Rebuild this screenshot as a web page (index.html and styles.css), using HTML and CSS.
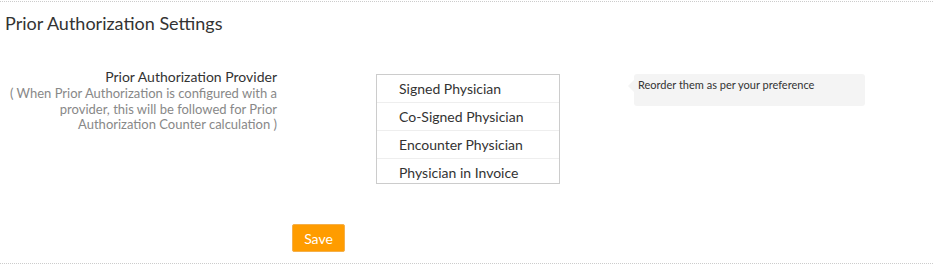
FILE: index.html
```html
<!DOCTYPE html>
<html lang="en">
<head>
    <meta charset="UTF-8">
    <meta name="viewport" content="width=device-width, initial-scale=1.0">
    <title>Prior Authorization Settings</title>
    <link rel="stylesheet" href="styles.css">
</head>
<body>
    <div class="settings">
        <h2 class="settings-title">Prior Authorization Settings</h2>
        <div class="setting-row">
            <div class="setting-label">
                <div class="label-main">Prior Authorization Provider</div>
                <div class="label-note">( When Prior Authorization is configured with a provider, this will be followed for Prior Authorization Counter calculation )</div>
            </div>
            <ul class="sort-list">
                <li>Signed Physician</li>
                <li>Co-Signed Physician</li>
                <li>Encounter Physician</li>
                <li>Physician in Invoice</li>
            </ul>
            <div class="hint">Reorder them as per your preference</div>
        </div>
        <div class="actions">
            <button type="button" class="btn-save">Save</button>
        </div>
    </div>
</body>
</html>
```

FILE: styles.css
```css
body {
    margin: 0;
    padding: 0;
    font-family: Lato, "Open Sans", sans-serif;
    color: #333;
    background: #fff;
}
.settings {
    margin-top: 1px;
    border-top: 1px dotted #ccc;
    border-bottom: 1px dotted #ccc;
    padding: 0 0 11px 0;
}
.settings-title {
    font-size: 18px;
    font-weight: normal;
    line-height: 20px;
    margin: 11px 0 0 5px;
}
.setting-row {
    display: flex;
    align-items: flex-start;
    margin-top: 36px;
}
.setting-label {
    width: 272px;
    margin-left: 5px;
    text-align: right;
}
.label-main {
    font-size: 14px;
    line-height: 16px;
}
.label-note {
    font-size: 13px;
    line-height: 15.5px;
    margin-top: 1px;
    color: #888;
}
.sort-list {
    list-style: none;
    margin: 5px 0 0 99px;
    padding: 0;
    width: 182px;
    height: 108px;
    overflow: hidden;
    border: 1px solid #ccc;
}
.sort-list li {
    box-sizing: border-box;
    height: 28px;
    line-height: 28px;
    padding-left: 22px;
    font-size: 14px;
    border-bottom: 1px solid #eee;
}
.hint {
    position: relative;
    margin: 5px 0 0 74px;
    width: 231px;
    height: 32px;
    padding: 4px 0 0 4px;
    box-sizing: border-box;
    background: #f4f4f4;
    border-radius: 3px;
    font-size: 11px;
    color: #333;
}
.hint::before {
    content: "";
    position: absolute;
    left: -6px;
    top: 6px;
    border-top: 6px solid transparent;
    border-bottom: 6px solid transparent;
    border-right: 6px solid #f4f4f4;
}
.actions {
    margin: 40px 0 0 292px;
}
.btn-save {
    width: 53px;
    height: 28px;
    padding: 0;
    background: #ff9c00;
    border: 1px solid #f5b04a;
    border-radius: 2px;
    color: #fff;
    font-family: Lato, sans-serif;
    font-size: 14px;
    cursor: pointer;
}
```
